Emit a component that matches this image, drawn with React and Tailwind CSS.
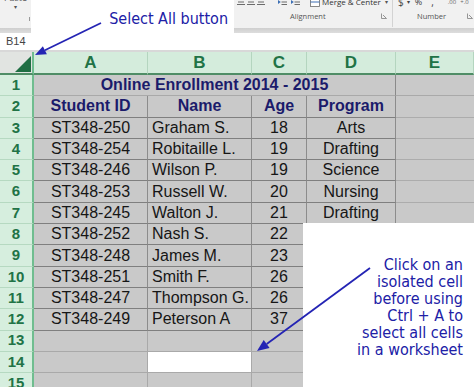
import React from "react";

const data = [
  ["ST348-250", "Graham S.", "18", "Arts"],
  ["ST348-254", "Robitaille L.", "19", "Drafting"],
  ["ST348-246", "Wilson P.", "19", "Science"],
  ["ST348-253", "Russell W.", "20", "Nursing"],
  ["ST348-245", "Walton J.", "21", "Drafting"],
  ["ST348-252", "Nash S.", "22", ""],
  ["ST348-248", "James M.", "23", ""],
  ["ST348-251", "Smith F.", "26", ""],
  ["ST348-247", "Thompson G.", "26", ""],
  ["ST348-249", "Peterson A", "37", ""],
];

function AlignIcon() {
  return (
    <svg width="8" height="9" viewBox="0 0 8 9" className="shrink-0">
      <path d="M0 1.5h8M1 4h6M0 6.5h8" stroke="#6b6b6b" strokeWidth="1" />
    </svg>
  );
}

function IndentIcon() {
  return (
    <svg width="9" height="9" viewBox="0 0 9 9" className="shrink-0">
      <path d="M3.5 1.5h5.5M3.5 4h5.5M3.5 6.5h5.5" stroke="#6b6b6b" strokeWidth="1" />
      <path d="M0 2l2.8 2-2.8 2z" fill="#3c6fb5" />
    </svg>
  );
}

function Launcher() {
  return (
    <svg width="6" height="6" viewBox="0 0 6 6" className="shrink-0">
      <path d="M0.5 0.5v5h5M2 2l3.5 3.5" stroke="#8a8a8a" strokeWidth="0.9" fill="none" />
    </svg>
  );
}

function Ribbon() {
  return (
    <div className="h-[33px] flex flex-col bg-[#f1f1f1] font-['Open_Sans',sans-serif] text-[#444]">
      <div className="h-[28px] flex">
        <div className="w-[31px] flex flex-col items-center">
          <div className="-mt-[7px] text-[9px] leading-[10px] text-[#555]">Paste</div>
          <div className="text-[6px] leading-[8px] text-[#555]">▾</div>
          <div className="self-end mt-[6px] mr-[1px] w-px h-[4px] bg-[#999]" />
        </div>
        <div className="w-[202px]" />
        <div className="w-[159px] flex flex-col">
          <div className="-mt-[4px] h-[12px] flex items-center">
            <div className="flex items-center gap-[2px] pl-[4px]">
              <AlignIcon />
              <AlignIcon />
              <AlignIcon />
            </div>
            <div className="ml-[13px] flex items-center gap-[4px]">
              <IndentIcon />
              <IndentIcon />
            </div>
            <svg width="10" height="10" viewBox="0 0 10 10" className="ml-[10px] shrink-0">
              <rect x="0.5" y="0.5" width="9" height="9" fill="#fff" stroke="#6b6b6b" strokeWidth="0.8" />
              <path d="M0.5 5h9" stroke="#3c6fb5" strokeWidth="1" />
            </svg>
            <span className="ml-[2px] text-[8px] leading-[10px] whitespace-nowrap text-[#333]">Merge &amp; Center</span>
            <span className="ml-[4px] text-[6px] leading-[8px] text-[#555]">▾</span>
          </div>
          <div className="flex items-center h-[12px] mt-[2px]">
            <span className="ml-[57px] text-[7.5px] leading-[10px] text-[#555]">Alignment</span>
            <div className="ml-auto mr-[5px]">
              <Launcher />
            </div>
          </div>
        </div>
        <div className="w-px h-[27px] bg-[#d3d3d3]" />
        <div className="flex-1 flex flex-col">
          <div className="-mt-[4px] h-[12px] flex items-center text-[#444]">
            <span className="ml-[5px] text-[10px] leading-[10px]">$</span>
            <span className="ml-[3px] text-[6px] leading-[8px]">▾</span>
            <span className="ml-[5px] text-[9px] leading-[10px]">%</span>
            <span className="ml-[9px] text-[10px] leading-[10px]">,</span>
            <span className="ml-[14px] text-[6px] leading-[8px] text-[#666]">.00</span>
            <span className="ml-[4px] text-[6px] leading-[8px] text-[#666]">+.0</span>
          </div>
          <div className="flex items-center h-[12px] mt-[2px]">
            <span className="ml-[24px] text-[7.5px] leading-[10px] text-[#555]">Number</span>
            <div className="ml-auto mr-[1px]">
              <Launcher />
            </div>
          </div>
        </div>
      </div>
      <div className="h-[5px] bg-gradient-to-b from-[#cfcfcf] to-[#dddddd]" />
    </div>
  );
}

const headBase =
  "flex items-center justify-center bg-[#d4ecdc] text-[#217346] font-bold text-[17px] border-r border-r-[#b4d5bf] border-b-2 border-b-[#4f8d66]";

function Sheet() {
  const rows = [];
  for (let r = 1; r <= 15; r++) {
    rows.push(
      <div
        key={"h" + r}
        className="flex items-center justify-center bg-[#d6eede] text-[#217346] font-bold text-[15px] border-r-2 border-r-[#6fbd8f] border-b border-b-[#b6d9c1]"
      >
        {r}
      </div>
    );
    if (r === 1) {
      rows.push(
        <div
          key="title"
          className="col-span-4 flex items-center justify-center bg-[#c9c9c9] border-r border-r-[#8a8a8a] border-b border-b-[#a9a9a9] text-[16px] font-bold text-[#1b1b6b]"
        >
          Online Enrollment 2014 - 2015
        </div>
      );
      rows.push(<div key="e1" className="bg-[#c9c9c9] border-b border-b-[#a9a9a9]" />);
      continue;
    }
    const vals =
      r === 2
        ? ["Student ID", "Name", "Age", "Program"]
        : r - 3 < data.length
        ? data[r - 3]
        : ["", "", "", ""];
    const inTable = r >= 2 && r <= 12;
    for (let c = 0; c < 4; c++) {
      const dark = inTable;
      const white = r === 14 && c === 1;
      const align = r === 2 ? "justify-center" : c === 1 ? "justify-start pl-[4px]" : "justify-center";
      const txt = r === 2 ? "font-bold text-[#1b1b6b]" : "text-[#161616]";
      rows.push(
        <div
          key={r + "-" + c}
          className={
            "flex items-center whitespace-nowrap overflow-hidden text-[16px] border-r border-b " +
            align +
            " " +
            txt +
            " " +
            (white ? "bg-white " : "bg-[#c9c9c9] ") +
            (dark ? "border-r-[#8c8c8c] border-b-[#7f7f7f]" : "border-r-[#a9a9a9] border-b-[#a9a9a9]")
          }
        >
          {vals[c]}
        </div>
      );
    }
    rows.push(<div key={"e" + r} className="bg-[#c9c9c9] border-b border-b-[#acacac]" />);
  }

  return (
    <div className="grid grid-cols-[34px_114px_104px_55px_89px_78px] grid-rows-[23px_repeat(15,21.3px)]">
      <div className="flex items-end justify-end bg-[#e1e4e1] border-r-2 border-r-[#6fbd8f] border-b-2 border-b-[#4f8d66] pr-[1px] pb-[1px]">
        <svg width="16" height="16" viewBox="0 0 16 16">
          <path d="M16 0V16H0Z" fill="#1f6e43" />
        </svg>
      </div>
      {["A", "B", "C", "D", "E"].map((l) => (
        <div key={l} className={headBase}>
          {l}
        </div>
      ))}
      {rows}
    </div>
  );
}

export default function App() {
  return (
    <div className="relative w-[474px] h-[387px] overflow-hidden bg-white font-['Liberation_Sans',Arial,sans-serif]">
      <Ribbon />
      <div className="h-[17px] bg-white flex items-center">
        <div className="pl-[6px] text-[11px] text-[#444]">B14</div>
      </div>
      <div className="h-[2px] bg-[#d8d8d8]" />
      <Sheet />

      <div className="absolute left-[31px] top-0 w-[203px] h-[50px] bg-white flex justify-end pr-[6px] pt-[10px]">
        <span className="font-['DejaVu_Sans_Condensed','DejaVu_Sans',sans-serif] text-[16px] leading-[17px] text-[#2020a6]">
          Select All button
        </span>
      </div>

      <div className="absolute left-[303px] top-[223px] right-0 bottom-0 bg-white pt-[33px] pr-[11px] text-right font-['DejaVu_Sans_Condensed','DejaVu_Sans',sans-serif] text-[16px] leading-[17px] text-[#2020a6]">
        <div>Click on an</div>
        <div>isolated cell</div>
        <div>before using</div>
        <div>Ctrl + A to</div>
        <div>select all cells</div>
        <div>in a worksheet</div>
      </div>

      <svg className="absolute inset-0 pointer-events-none" width="474" height="387" viewBox="0 0 474 387">
        <line x1="101" y1="23" x2="44.9" y2="50.2" stroke="#2424b4" strokeWidth="1.8" />
        <polygon points="35,55 46.9,54.3 42.9,46.2" fill="#2424b4" />
        <line x1="370" y1="268" x2="266.7" y2="343.9" stroke="#2424b4" strokeWidth="1.8" />
        <polygon points="257,351 269.6,347.9 263.7,339.9" fill="#2424b4" />
      </svg>
    </div>
  );
}
